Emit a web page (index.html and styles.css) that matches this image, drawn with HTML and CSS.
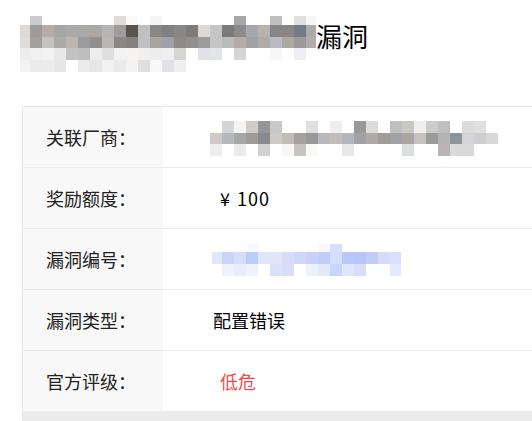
FILE: index.html
```html
<!DOCTYPE html>
<html lang="zh-CN">
<head>
  <meta charset="UTF-8">
  <meta name="viewport" content="width=device-width, initial-scale=1.0">
  <link rel="stylesheet" href="styles.css">
  <title>漏洞详情</title>
</head>
<body>
  <div class="page">
    <h1 class="bug-title">
      <svg class="mosaic title-mosaic" width="296" height="56" viewBox="0 0 296 56">
        <rect x="10" y="0" width="12" height="9" fill="#c8ccd0"/>
        <rect x="94" y="0" width="12" height="9" fill="#dcdbd8"/>
        <rect x="106" y="0" width="12" height="9" fill="#fafafa"/>
        <rect x="130" y="0" width="12" height="9" fill="#f5f5f5"/>
        <rect x="214" y="0" width="12" height="9" fill="#a8a5a6"/>
        <rect x="250" y="0" width="12" height="9" fill="#c0bfc0"/>
        <rect x="274" y="0" width="12" height="9" fill="#e0e0dc"/>
        <rect x="286" y="0" width="10" height="9" fill="#f5f7fa"/>

        <rect x="0" y="9" width="10" height="12" fill="#ddd9d6"/>
        <rect x="10" y="9" width="12" height="12" fill="#a09a98"/>
        <rect x="22" y="9" width="12" height="12" fill="#b5aca7"/>
        <rect x="34" y="9" width="12" height="12" fill="#a6a6a6"/>
        <rect x="46" y="9" width="12" height="12" fill="#aaaaaa"/>
        <rect x="58" y="9" width="12" height="12" fill="#a9aaa8"/>
        <rect x="70" y="9" width="12" height="12" fill="#aca7a4"/>
        <rect x="82" y="9" width="12" height="12" fill="#b5b5b5"/>
        <rect x="94" y="9" width="12" height="12" fill="#9c9c9c"/>
        <rect x="106" y="9" width="12" height="12" fill="#5a534e"/>
        <rect x="118" y="9" width="12" height="12" fill="#c0c0c0"/>
        <rect x="130" y="9" width="12" height="12" fill="#888888"/>
        <rect x="142" y="9" width="12" height="12" fill="#808080"/>
        <rect x="154" y="9" width="12" height="12" fill="#888888"/>
        <rect x="166" y="9" width="12" height="12" fill="#7f7b78"/>
        <rect x="178" y="9" width="12" height="12" fill="#dcd8d3"/>
        <rect x="190" y="9" width="12" height="12" fill="#c5c5c5"/>
        <rect x="202" y="9" width="12" height="12" fill="#7a7a7a"/>
        <rect x="214" y="9" width="12" height="12" fill="#8b8b8b"/>
        <rect x="226" y="9" width="12" height="12" fill="#a6a8ad"/>
        <rect x="238" y="9" width="12" height="12" fill="#b9b3ad"/>
        <rect x="250" y="9" width="12" height="12" fill="#868686"/>
        <rect x="262" y="9" width="12" height="12" fill="#8a8580"/>
        <rect x="274" y="9" width="12" height="12" fill="#737b86"/>
        <rect x="286" y="9" width="10" height="12" fill="#aaaaaa"/>

        <rect x="0" y="21" width="10" height="11" fill="#e0dcda"/>
        <rect x="10" y="21" width="12" height="11" fill="#a4a09c"/>
        <rect x="22" y="21" width="12" height="11" fill="#c6c2bf"/>
        <rect x="34" y="21" width="12" height="11" fill="#aeaaa7"/>
        <rect x="46" y="21" width="12" height="11" fill="#bdb5ae"/>
        <rect x="58" y="21" width="12" height="11" fill="#989ca0"/>
        <rect x="70" y="21" width="12" height="11" fill="#928e8b"/>
        <rect x="82" y="21" width="12" height="11" fill="#bdb7b2"/>
        <rect x="94" y="21" width="12" height="11" fill="#8a8885"/>
        <rect x="106" y="21" width="12" height="11" fill="#858181"/>
        <rect x="118" y="21" width="12" height="11" fill="#c0c0c0"/>
        <rect x="130" y="21" width="12" height="11" fill="#a8a4a2"/>
        <rect x="142" y="21" width="12" height="11" fill="#9ea2a8"/>
        <rect x="154" y="21" width="12" height="11" fill="#8e8a87"/>
        <rect x="166" y="21" width="12" height="11" fill="#909090"/>
        <rect x="178" y="21" width="12" height="11" fill="#999c9b"/>
        <rect x="190" y="21" width="12" height="11" fill="#c5c5c5"/>
        <rect x="202" y="21" width="12" height="11" fill="#babcbc"/>
        <rect x="214" y="21" width="12" height="11" fill="#b5aca7"/>
        <rect x="226" y="21" width="12" height="11" fill="#a0a3a1"/>
        <rect x="238" y="21" width="12" height="11" fill="#b0aba6"/>
        <rect x="250" y="21" width="12" height="11" fill="#b8bcc2"/>
        <rect x="262" y="21" width="12" height="11" fill="#aca8a2"/>
        <rect x="274" y="21" width="12" height="11" fill="#9a9a98"/>
        <rect x="286" y="21" width="10" height="11" fill="#b0acaa"/>

        <rect x="0" y="32" width="10" height="12" fill="#ececec"/>
        <rect x="10" y="32" width="12" height="12" fill="#eff0f0"/>
        <rect x="22" y="32" width="12" height="12" fill="#f2f2f2"/>
        <rect x="34" y="32" width="12" height="12" fill="#e8e8e8"/>
        <rect x="46" y="32" width="12" height="12" fill="#c2c2c2"/>
        <rect x="58" y="32" width="12" height="12" fill="#bfbebc"/>
        <rect x="70" y="32" width="12" height="12" fill="#ececec"/>
        <rect x="82" y="32" width="12" height="12" fill="#e0dedd"/>
        <rect x="94" y="32" width="12" height="12" fill="#f2f2f2"/>
        <rect x="106" y="32" width="12" height="12" fill="#f5f4f2"/>
        <rect x="118" y="32" width="12" height="12" fill="#f0f0ee"/>
        <rect x="130" y="32" width="12" height="12" fill="#eceded"/>
        <rect x="142" y="32" width="12" height="12" fill="#efefef"/>
        <rect x="154" y="32" width="12" height="12" fill="#d5d5d2"/>
        <rect x="178" y="32" width="12" height="12" fill="#e2e2e6"/>
        <rect x="190" y="32" width="12" height="12" fill="#e2e4e6"/>
        <rect x="214" y="32" width="12" height="12" fill="#d5d5d8"/>
        <rect x="250" y="32" width="12" height="12" fill="#f6f7f8"/>
        <rect x="274" y="32" width="12" height="12" fill="#eceef2"/>

        <rect x="0" y="44" width="10" height="12" fill="#f3f3f3"/>
        <rect x="10" y="44" width="12" height="12" fill="#eceaea"/>
        <rect x="22" y="44" width="12" height="12" fill="#ebeced"/>
        <rect x="34" y="44" width="12" height="12" fill="#e6e7e8"/>
        <rect x="58" y="44" width="12" height="12" fill="#ecebeb"/>
        <rect x="70" y="44" width="12" height="12" fill="#e6e6e6"/>
        <rect x="82" y="44" width="12" height="12" fill="#f2f2f2"/>
        <rect x="94" y="44" width="12" height="12" fill="#ebeaea"/>
        <rect x="106" y="44" width="12" height="12" fill="#f3f3f3"/>
        <rect x="118" y="44" width="12" height="12" fill="#e0dfde"/>
        <rect x="130" y="44" width="12" height="12" fill="#f8f8f6"/>
        <rect x="142" y="44" width="12" height="12" fill="#e2e2e6"/>
        <rect x="154" y="44" width="12" height="12" fill="#eeeff1"/>
      </svg>
      <span class="title-text">漏洞</span>
    </h1>

    <div class="detail-table">
      <div class="detail-row">
        <div class="detail-label">关联厂商：</div>
        <div class="detail-value">
          <svg class="mosaic vendor-mosaic" width="288" height="46" viewBox="0 0 288 46">
            <rect x="12" y="5" width="12" height="12" fill="#d3d6d8"/>
            <rect x="24" y="5" width="12" height="12" fill="#f5f4f2"/>
            <rect x="36" y="5" width="12" height="12" fill="#d0ccc9"/>
            <rect x="48" y="5" width="12" height="12" fill="#969696"/>
            <rect x="60" y="5" width="12" height="12" fill="#c8c8c8"/>
            <rect x="96" y="5" width="12" height="12" fill="#e0e0e0"/>
            <rect x="120" y="5" width="12" height="12" fill="#eeeeee"/>
            <rect x="144" y="5" width="12" height="12" fill="#999999"/>
            <rect x="156" y="5" width="12" height="12" fill="#dcdcdc"/>
            <rect x="180" y="5" width="12" height="12" fill="#bfc0be"/>
            <rect x="192" y="5" width="12" height="12" fill="#cac8c5"/>
            <rect x="204" y="5" width="12" height="12" fill="#f0efec"/>
            <rect x="216" y="5" width="12" height="12" fill="#cbcbcd"/>
            <rect x="228" y="5" width="12" height="12" fill="#bdbfc0"/>
            <rect x="252" y="5" width="12" height="12" fill="#dddcd8"/>
            <rect x="264" y="5" width="12" height="12" fill="#e0e0e0"/>

            <rect x="0" y="17" width="12" height="11" fill="#cfcac7"/>
            <rect x="12" y="17" width="12" height="11" fill="#b5b9bd"/>
            <rect x="24" y="17" width="12" height="11" fill="#a6a6a6"/>
            <rect x="36" y="17" width="12" height="11" fill="#9d9a97"/>
            <rect x="48" y="17" width="12" height="11" fill="#868a8d"/>
            <rect x="60" y="17" width="12" height="11" fill="#cecac7"/>
            <rect x="72" y="17" width="12" height="11" fill="#c2bcb7"/>
            <rect x="84" y="17" width="12" height="11" fill="#a6a19c"/>
            <rect x="96" y="17" width="12" height="11" fill="#989898"/>
            <rect x="108" y="17" width="12" height="11" fill="#b9b9bd"/>
            <rect x="120" y="17" width="12" height="11" fill="#c2bdb7"/>
            <rect x="132" y="17" width="12" height="11" fill="#b4b6be"/>
            <rect x="144" y="17" width="12" height="11" fill="#a0a2a5"/>
            <rect x="156" y="17" width="12" height="11" fill="#afaaa6"/>
            <rect x="168" y="17" width="12" height="11" fill="#a09d98"/>
            <rect x="180" y="17" width="12" height="11" fill="#a2a2a4"/>
            <rect x="192" y="17" width="12" height="11" fill="#aca6a0"/>
            <rect x="204" y="17" width="12" height="11" fill="#c6c2bf"/>
            <rect x="216" y="17" width="12" height="11" fill="#9b9b9b"/>
            <rect x="228" y="17" width="12" height="11" fill="#b4b4b4"/>
            <rect x="240" y="17" width="12" height="11" fill="#8b939b"/>
            <rect x="252" y="17" width="12" height="11" fill="#d2d4d8"/>
            <rect x="264" y="17" width="12" height="11" fill="#cecece"/>
            <rect x="276" y="17" width="12" height="11" fill="#d8d8d8"/>

            <rect x="0" y="28" width="12" height="12" fill="#eeeeee"/>
            <rect x="24" y="28" width="12" height="12" fill="#ebebeb"/>
            <rect x="48" y="28" width="12" height="12" fill="#d2d2d2"/>
            <rect x="72" y="28" width="12" height="12" fill="#f8f7f5"/>
            <rect x="84" y="28" width="12" height="12" fill="#c8c4c4"/>
            <rect x="96" y="28" width="12" height="12" fill="#f8faf8"/>
            <rect x="132" y="28" width="12" height="12" fill="#e8e8e8"/>
            <rect x="192" y="28" width="12" height="12" fill="#dadee0"/>
            <rect x="228" y="28" width="12" height="12" fill="#b9b4b4"/>
            <rect x="240" y="28" width="12" height="12" fill="#dadada"/>
            <rect x="252" y="28" width="12" height="12" fill="#d9d9d9"/>
          </svg>
        </div>
      </div>

      <div class="detail-row">
        <div class="detail-label">奖励额度：</div>
        <div class="detail-value indent amount">¥ 100</div>
      </div>

      <div class="detail-row">
        <div class="detail-label">漏洞编号：</div>
        <div class="detail-value">
          <svg class="mosaic number-mosaic" width="189" height="37" viewBox="0 0 189 37">
            <rect x="34" y="0" width="12" height="8" fill="#f8f8ff"/>
            <rect x="106" y="0" width="12" height="8" fill="#f8f8fe"/>
            <rect x="118" y="0" width="12" height="8" fill="#d5defa"/>

            <rect x="0" y="8" width="10" height="12" fill="#e0e6fb"/>
            <rect x="10" y="8" width="12" height="12" fill="#c8d4fa"/>
            <rect x="22" y="8" width="12" height="12" fill="#d5dffb"/>
            <rect x="34" y="8" width="12" height="12" fill="#bccbf8"/>
            <rect x="46" y="8" width="12" height="12" fill="#dfe6fb"/>
            <rect x="58" y="8" width="12" height="12" fill="#e3e6fb"/>
            <rect x="70" y="8" width="12" height="12" fill="#d8dbfa"/>
            <rect x="82" y="8" width="12" height="12" fill="#d0d8f9"/>
            <rect x="94" y="8" width="12" height="12" fill="#c8d2f9"/>
            <rect x="106" y="8" width="12" height="12" fill="#bfcdf8"/>
            <rect x="118" y="8" width="12" height="12" fill="#d5defa"/>
            <rect x="130" y="8" width="12" height="12" fill="#b8c8f8"/>
            <rect x="142" y="8" width="12" height="12" fill="#b7c6f9"/>
            <rect x="154" y="8" width="12" height="12" fill="#bfcdf8"/>
            <rect x="166" y="8" width="12" height="12" fill="#d5dcfa"/>
            <rect x="178" y="8" width="11" height="12" fill="#d9e0fb"/>

            <rect x="10" y="20" width="12" height="12" fill="#eef2fd"/>
            <rect x="22" y="20" width="12" height="12" fill="#e8ecfc"/>
            <rect x="34" y="20" width="12" height="12" fill="#eef2fd"/>
            <rect x="58" y="20" width="12" height="12" fill="#d8e2fb"/>
            <rect x="70" y="20" width="12" height="12" fill="#d8ddfa"/>
            <rect x="94" y="20" width="12" height="12" fill="#eef1fd"/>
            <rect x="106" y="20" width="12" height="12" fill="#e3e8fc"/>
            <rect x="118" y="20" width="12" height="12" fill="#c8d6fa"/>
            <rect x="130" y="20" width="12" height="12" fill="#e0e6fb"/>
            <rect x="142" y="20" width="12" height="12" fill="#d8ddfa"/>
            <rect x="178" y="20" width="11" height="12" fill="#e3e8fb"/>
            <rect x="58" y="32" width="24" height="5" fill="#fcfcfc"/>
          </svg>
        </div>
      </div>

      <div class="detail-row">
        <div class="detail-label">漏洞类型：</div>
        <div class="detail-value">配置错误</div>
      </div>

      <div class="detail-row">
        <div class="detail-label">官方评级：</div>
        <div class="detail-value indent level-low">低危</div>
      </div>

      <div class="scroll-track"></div>
    </div>
  </div>
</body>
</html>
```

FILE: styles.css
```css
body {
  margin: 0;
  font-family: 'Noto Sans CJK SC', 'Noto Sans', sans-serif;
  background-color: #fff;
  color: #000;
}

.page {
  width: 532px;
  height: 421px;
  overflow: hidden;
}

.bug-title {
  display: flex;
  align-items: flex-start;
  margin: 0;
  padding: 16px 0 0 20px;
  height: 106px;
  box-sizing: border-box;
  font-weight: normal;
}

.mosaic {
  display: block;
  shape-rendering: crispEdges;
}

.title-text {
  margin-top: 5px;
  font-size: 26px;
  line-height: 30px;
  color: #000;
}

.detail-table {
  margin-left: 22px;
  width: 560px;
  border-top: 1px solid #e8e8e8;
  border-left: 1px solid #e8e8e8;
}

.detail-row {
  display: flex;
  height: 60px;
  border-bottom: 1px solid #ebebeb;
}

.detail-row:nth-last-child(2) {
  border-bottom: none;
}

.detail-label {
  width: 140px;
  flex-shrink: 0;
  display: flex;
  align-items: center;
  padding-left: 23px;
  box-sizing: border-box;
  background-color: #f8f8f8;
  font-size: 18px;
  color: #222;
}

.detail-value {
  flex: 1;
  display: flex;
  align-items: center;
  padding-left: 50px;
  font-size: 18px;
  color: #000;
}

.detail-value.indent {
  padding-left: 57px;
}

.amount {
  letter-spacing: 1px;
  word-spacing: 1px;
}

.vendor-mosaic {
  margin-left: -3px;
  margin-top: 3px;
}

.number-mosaic {
  margin-left: -1px;
  margin-top: 6px;
}

.level-low {
  color: #f94a4a;
}

.scroll-track {
  height: 10px;
  background-color: #ececec;
}
```
